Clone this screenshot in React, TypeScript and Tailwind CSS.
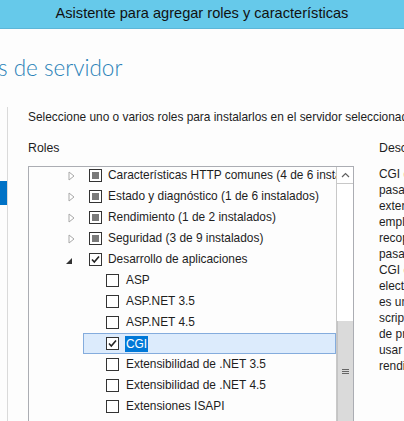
import React from "react";

const FONT = "font-['Liberation_Sans','Arial',sans-serif]";

function Box({ state }: { state: "none" | "partial" | "checked" }) {
  return (
    <div className="w-[13px] h-[13px] border border-[#333333] bg-white shrink-0 flex items-center justify-center">
      {state === "partial" && <div className="w-[7px] h-[7px] bg-[#7a7a7a]" />}
      {state === "checked" && (
        <svg width="11" height="11" viewBox="0 0 11 11">
          <path d="M2 5.5 L4.3 8 L9 2.5" fill="none" stroke="#222" strokeWidth="1.6" />
        </svg>
      )}
    </div>
  );
}

function Arrow({ open }: { open?: boolean }) {
  return (
    <div className="w-[21px] h-[21px] shrink-0 flex items-center">
      {open ? (
        <svg width="8" height="8" viewBox="0 0 8 8" className="-ml-[3px] mt-[2px]">
          <path d="M7 1 L7 7 L1 7 Z" fill="#333" />
        </svg>
      ) : (
        <svg width="7" height="10" viewBox="0 0 7 10">
          <path d="M1 1 L6 5 L1 9 Z" fill="white" stroke="#a8a8a8" strokeWidth="1" />
        </svg>
      )}
    </div>
  );
}

function Row1({ label, state, open }: { label: string; state: "none" | "partial" | "checked"; open?: boolean }) {
  return (
    <div className="h-[21px] flex items-center pl-[39px] whitespace-nowrap">
      <Arrow open={open} />
      <Box state={state} />
      <span className="ml-[6px]">{label}</span>
    </div>
  );
}

function Row2({ label, state, selected }: { label: string; state: "none" | "partial" | "checked"; selected?: boolean }) {
  if (selected) {
    return (
      <div className="h-[21px] ml-[54px] flex items-center pl-[22px] border border-[#84acdd] bg-[#dcebfc] whitespace-nowrap">
        <Box state={state} />
        <span className="ml-[6px] px-[1px] bg-[#0078d7] text-white leading-[16px]">{label}</span>
      </div>
    );
  }
  return (
    <div className="h-[21px] flex items-center pl-[77px] whitespace-nowrap">
      <Box state={state} />
      <span className="ml-[7px]">{label}</span>
    </div>
  );
}

export default function App() {
  const desc = [
    "CGI define cómo un servidor web",
    "pasa información a un programa",
    "externo. Los usos típicos incluyen",
    "emplear un formulario web para",
    "recopilar información y, a continuación,",
    "pasarla a un script CGI para que la",
    "CGI con un correo",
    "electrónico. Como CGI",
    "es un estándar, los",
    "scripts CGI se pueden escribir con",
    "de programación. La desventaja de",
    "usar CGI es la sobrecarga de",
    "rendimiento.",
  ];
  return (
    <div className={`w-[404px] h-[421px] overflow-hidden bg-[#fdfdfd] text-[#1e1e1e] ${FONT}`}>
      <div className="h-[29px] bg-[#66c9ea] border-b border-[#5cb6d8] flex items-center justify-center text-[14.6px] text-[#111] pb-[1px]">
        Asistente para agregar roles y características
      </div>
      <div className="h-[78px] pt-[25px] pl-0">
        <div className="-ml-[2px] text-[22.5px] font-light leading-[28px] text-[#2a82b8] whitespace-nowrap font-['Lato',sans-serif]">
          s de servidor
        </div>
      </div>
      <div className="flex">
        <div className="w-[8px] shrink-0 border-r border-[#dadada] h-[314px]">
          <div className="mt-[74px] w-[7px] h-[24px] bg-[#0072c6]" />
        </div>
        <div className="flex-1 pl-[20px] text-[11.9px]">
          <div className="pt-[2px] leading-[16px] whitespace-nowrap">
            Seleccione uno o varios roles para instalarlos en el servidor seleccionado.
          </div>
          <div className="flex mt-[15px]">
            <div className="w-[326px] shrink-0">
              <div className="leading-[16px] text-[12.3px] h-[26px]">Roles</div>
              <div className="border-l border-t border-r border-[#abadb3] flex h-[300px]">
                <div className="w-[307px] overflow-hidden">
                  <div className="-mt-[2px]">
                    <Row1 label="Características HTTP comunes (4 de 6 instalados)" state="partial" />
                    <Row1 label="Estado y diagnóstico (1 de 6 instalados)" state="partial" />
                    <Row1 label="Rendimiento (1 de 2 instalados)" state="partial" />
                    <Row1 label="Seguridad (3 de 9 instalados)" state="partial" />
                    <Row1 label="Desarrollo de aplicaciones" state="checked" open />
                    <Row2 label="ASP" state="none" />
                    <Row2 label="ASP.NET 3.5" state="none" />
                    <Row2 label="ASP.NET 4.5" state="none" />
                    <Row2 label="CGI" state="checked" selected />
                    <Row2 label="Extensibilidad de .NET 3.5" state="none" />
                    <Row2 label="Extensibilidad de .NET 4.5" state="none" />
                    <Row2 label="Extensiones ISAPI" state="none" />
                    <Row2 label="Filtros ISAPI" state="none" />
                  </div>
                </div>
                <div className="w-[17px] shrink-0 border-l border-[#c8c8c8] bg-white flex flex-col">
                  <div className="h-[17px] border-b border-[#c8c8c8] flex items-center justify-center">
                    <svg width="9" height="6" viewBox="0 0 9 6">
                      <path d="M1 5 L4.5 1.5 L8 5" fill="none" stroke="#606060" strokeWidth="1.2" />
                    </svg>
                  </div>
                  <div className="h-[137px]" />
                  <div className="flex-1 bg-[#dadada] border-l border-[#c4c4c4] flex flex-col items-center pt-[48px] gap-[1px]">
                    <div className="w-[7px] h-[1px] bg-[#666]" />
                    <div className="w-[7px] h-[1px] bg-[#666]" />
                    <div className="w-[7px] h-[1px] bg-[#666]" />
                  </div>
                </div>
              </div>
            </div>
            <div className="ml-[25px] w-[200px] shrink-0">
              <div className="leading-[16px] text-[12.3px] h-[26px] whitespace-nowrap">Descripción</div>
              <div className="leading-[16px] whitespace-nowrap">
                {desc.map((d, i) => (
                  <div key={i}>{d}</div>
                ))}
              </div>
            </div>
          </div>
        </div>
      </div>
    </div>
  );
}
